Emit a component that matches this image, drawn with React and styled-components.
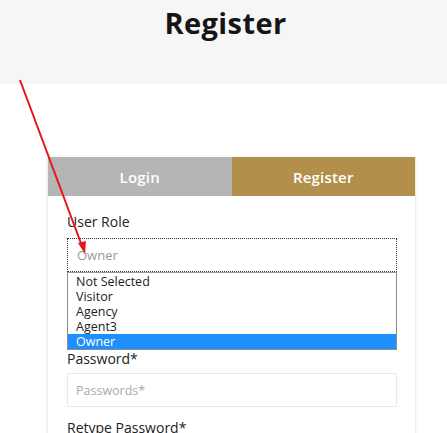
import { createGlobalStyle, styled } from "styled-components";

const GlobalStyle = createGlobalStyle`
  body {
    margin: 0;
    background: #fff;
    font-family: "Open Sans", "Liberation Sans", sans-serif;
    color: #222;
    overflow: hidden;
  }
`;

const Page = styled.div`
  position: relative;
  width: 447px;
  height: 433px;
  overflow: hidden;
`;

const TitleBand = styled.header`
  height: 84px;
  background: #f6f6f6;
  display: flex;
  justify-content: center;
  &>h1 {
    margin: 6px 0 0 4px;
    font-size: 29px;
    font-weight: 700;
    color: #151515;
    letter-spacing: 0.4px;
    line-height: 34px;
  }
`;

const Card = styled.section`
  width: 367px;
  margin: 73px 0 0 47px;
  background: #fff;
  border: 1px solid #ececec;
  border-top: none;
  box-shadow: 0 0 4px rgba(0, 0, 0, 0.06);
`;

const Tabs = styled.div`
  display: grid;
  grid-template-columns: 1fr 1fr;
  height: 39px;
`;

const Tab = styled.div`
  display: flex;
  align-items: center;
  justify-content: center;
  background: ${p => (p.$active ? "#b28f4a" : "#b5b5b5")};
  color: #fff;
  font-size: 15px;
  font-weight: 600;
  letter-spacing: 0.2px;
`;

const Form = styled.div`
  padding: 17px 18px 0 19px;
  display: flex;
  flex-direction: column;
`;

const Label = styled.label`
  font-size: 14px;
  line-height: 18px;
  color: #222;
  margin-top: ${p => p.$top || 0}px;
  margin-bottom: ${p => p.$gap || 6}px;
`;

const SelectBox = styled.div`
  height: 34px;
  box-sizing: border-box;
  border: 1px dotted #333;
  display: flex;
  align-items: center;
  padding-left: 9px;
  font-size: 13px;
  color: #999;
`;

const ListBox = styled.ul`
  margin: 0;
  padding: 1px 0 0;
  list-style: none;
  border: 1px solid #8d8d8d;
  border-top-color: #999;
  background: #fff;
`;

const Option = styled.li`
  height: 15px;
  line-height: 15px;
  padding-left: 8px;
  font-size: 12.5px;
  color: ${p => (p.$selected ? "#fff" : "#222")};
  background: ${p => (p.$selected ? "#1f8fff" : "transparent")};
`;

const Input = styled.div`
  height: 34px;
  box-sizing: border-box;
  border: 1px solid #e8e8e8;
  border-radius: 2px;
  display: flex;
  align-items: center;
  padding-left: 8px;
  font-size: 12.5px;
  color: #aaa;
  margin-bottom: 12px;
`;

const Arrow = styled.svg`
  position: absolute;
  left: 0;
  top: 0;
  pointer-events: none;
`;

const roles = ["Not Selected", "Visitor", "Agency", "Agent3", "Owner"];

export default function App() {
  return (
    <Page>
      <GlobalStyle />
      <TitleBand>
        <h1>Register</h1>
      </TitleBand>
      <Card>
        <Tabs>
          <Tab>Login</Tab>
          <Tab $active>Register</Tab>
        </Tabs>
        <Form>
          <Label $gap={7}>User Role</Label>
          <SelectBox>Owner</SelectBox>
          <ListBox>
            {roles.map(r => (
              <Option key={r} $selected={r === "Owner"}>{r}</Option>
            ))}
          </ListBox>
          <Label $top={0} $gap={5}>Password*</Label>
          <Input>Passwords*</Input>
          <Label>Retype Password*</Label>
        </Form>
      </Card>
      <Arrow width="447" height="433" viewBox="0 0 447 433">
        <line x1="20" y1="80" x2="82" y2="246" stroke="#e8141b" strokeWidth="2" />
        <polygon points="85,254 78,243 86,241" fill="#e8141b" />
      </Arrow>
    </Page>
  );
}
